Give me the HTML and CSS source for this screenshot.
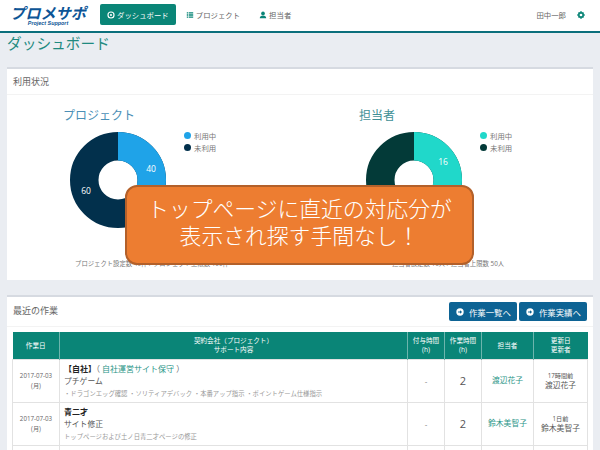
FILE: index.html
```html
<!DOCTYPE html>
<html lang="ja">
<head>
<meta charset="utf-8">
<title>ダッシュボード</title>
<link rel="stylesheet" href="styles.css">
</head>
<body>
<header class="topbar">
  <div class="logo">
    <div class="logo-main">プロメサポ</div>
    <div class="logo-sub">Project Support</div>
  </div>
  <nav class="nav">
    <a class="nav-item active">
      <svg class="nav-icon" viewBox="0 0 10 10"><circle cx="5" cy="5" r="3.8" fill="none" stroke="currentColor" stroke-width="1.4"/><circle cx="5" cy="5" r="1.3" fill="currentColor"/></svg>
      ダッシュボード</a>
    <a class="nav-item">
      <svg class="nav-icon" viewBox="0 0 10 10"><path d="M1 1.5h1.6v1.6H1zM3.4 1.5H9v1.6H3.4zM1 4.2h1.6v1.6H1zM3.4 4.2H9v1.6H3.4zM1 6.9h1.6v1.6H1zM3.4 6.9H9v1.6H3.4z" fill="#0a8577"/></svg>
      プロジェクト</a>
    <a class="nav-item">
      <svg class="nav-icon" viewBox="0 0 10 10"><circle cx="5" cy="3" r="2.3" fill="#0a8577"/><path d="M1 9.2c0-2.6 1.6-3.6 4-3.6s4 1 4 3.6z" fill="#0a8577"/></svg>
      担当者</a>
  </nav>
  <div class="user">
    <span>田中一郎</span>
    <svg class="gear" viewBox="0 0 10 10"><circle cx="5" cy="5" r="2.7" fill="none" stroke="#0a8577" stroke-width="2"/><path d="M4 .3h2v2H4zM4 7.7h2v2H4zM.3 4h2v2h-2zM7.7 4h2v2h-2z" fill="#0a8577"/><path d="M1.2 2.6l1.4-1.4 1.2 1.2-1.4 1.4zM6.2 7.6l1.4-1.4 1.2 1.2-1.4 1.4zM7.4 1.2l1.4 1.4-1.2 1.2-1.4-1.4zM2.4 6.2l1.4 1.4-1.2 1.2-1.4-1.4z" fill="#0a8577"/></svg>
  </div>
</header>

<main class="main">
  <h1 class="page-title">ダッシュボード</h1>

  <section class="card usage">
    <h2 class="card-head">利用状況</h2>
    <div class="charts">
      <div class="chart">
        <h3 class="chart-title blue">プロジェクト</h3>
        <div class="chart-row">
          <svg class="donut" viewBox="0 0 96 96">
            <circle cx="48" cy="48" r="33.75" fill="none" stroke="#02304c" stroke-width="28.5"/>
            <circle cx="48" cy="48" r="33.75" fill="none" stroke="#1fa3e8" stroke-width="28.5" stroke-dasharray="84.82 212.06" transform="rotate(-90 48 48)"/>
            <text x="81" y="40.3" class="donut-label">40</text>
            <text x="16" y="61.5" class="donut-label">60</text>
          </svg>
          <ul class="legend">
            <li><span class="dot dot-blue"></span>利用中</li>
            <li><span class="dot dot-navy"></span>未利用</li>
          </ul>
        </div>
        <p class="caption">プロジェクト設定数 40件 / プロジェクト上限数 100件</p>
      </div>
      <div class="chart">
        <h3 class="chart-title teal">担当者</h3>
        <div class="chart-row">
          <svg class="donut" viewBox="0 0 96 96">
            <circle cx="48" cy="48" r="33.75" fill="none" stroke="#033a38" stroke-width="28.5"/>
            <circle cx="48" cy="48" r="33.75" fill="none" stroke="#20d8ca" stroke-width="28.5" stroke-dasharray="67.86 212.06" transform="rotate(-90 48 48)"/>
            <text x="77" y="32.7" class="donut-label">16</text>
          </svg>
          <ul class="legend">
            <li><span class="dot dot-aqua"></span>利用中</li>
            <li><span class="dot dot-deep"></span>未利用</li>
          </ul>
        </div>
        <p class="caption">担当者設定数 16人 / 担当者上限数 50人</p>
      </div>
    </div>
  </section>

  <section class="card recent">
    <div class="recent-head">
      <h2 class="recent-title">最近の作業</h2>
      <div class="actions">
        <a class="btn"><svg class="btn-icon" viewBox="0 0 10 10"><circle cx="5" cy="5" r="4.6" fill="#fff"/><path d="M2.6 4.3h2.4V2.7L7.6 5 5 7.3V5.7H2.6z" fill="#0d6394"/></svg>作業一覧へ</a>
        <a class="btn"><svg class="btn-icon" viewBox="0 0 10 10"><circle cx="5" cy="5" r="4.6" fill="#fff"/><path d="M2.6 4.3h2.4V2.7L7.6 5 5 7.3V5.7H2.6z" fill="#0d6394"/></svg>作業実績へ</a>
      </div>
    </div>
    <table class="work">
      <colgroup>
        <col class="c-date"><col class="c-main"><col class="c-a"><col class="c-b"><col class="c-c"><col class="c-d">
      </colgroup>
      <thead>
        <tr>
          <th>作業日</th>
          <th>契約会社（プロジェクト）<br>サポート内容</th>
          <th>付与時間<br>(h)</th>
          <th>作業時間<br>(h)</th>
          <th>担当者</th>
          <th>更新日<br>更新者</th>
        </tr>
      </thead>
      <tbody>
        <tr>
          <td class="date">2017-07-03<br>(月)</td>
          <td class="desc">
            <div class="company"><b>【自社】</b>（ <a class="link">自社運営サイト保守</a> ）</div>
            <div class="task">プチゲーム</div>
            <div class="note">・ドラゴンエッグ確認 ・ソリティアデバック ・本番アップ指示 ・ポイントゲーム仕様指示</div>
          </td>
          <td class="num dash">-</td>
          <td class="num">2</td>
          <td class="person"><a class="link">渡辺花子</a></td>
          <td class="update"><small>17時間前</small><br>渡辺花子</td>
        </tr>
        <tr>
          <td class="date">2017-07-03<br>(月)</td>
          <td class="desc">
            <div class="company"><b>青二才</b></div>
            <div class="task">サイト修正</div>
            <div class="note">トップページおよび土ノ日青二才ページの修正</div>
          </td>
          <td class="num dash">-</td>
          <td class="num">2</td>
          <td class="person"><a class="link">鈴木美智子</a></td>
          <td class="update"><small>1日前</small><br>鈴木美智子</td>
        </tr>
        <tr>
          <td class="date">&nbsp;</td><td class="desc">&nbsp;</td><td></td><td></td><td></td><td></td>
        </tr>
      </tbody>
    </table>
  </section>
</main>

<div class="callout">トップページに直近の対応分が<br>表示され探す手間なし！</div>
</body>
</html>
```

FILE: styles.css
```css
* { box-sizing: border-box; }
html, body { margin: 0; padding: 0; }
html { height: 450px; overflow: hidden; }
body {
  position: relative;
  width: 600px;
  height: 450px;
  overflow: hidden;
  background: #eaedf2;
  color: #555;
  font-family: "Open Sans", "Noto Sans CJK JP", sans-serif;
  font-size: 8px;
}
h1, h2, h3, p, ul { margin: 0; padding: 0; font-weight: 400; }
ul { list-style: none; }

.topbar {
  display: flex;
  align-items: center;
  height: 33px;
  padding: 0 15px 2px 10px;
  background: #fff;
  border-bottom: 2px solid #0b6f7c;
}
.logo { width: 76px; text-align: center; color: #0d5596; }
.logo-main {
  font: italic 700 15.2px/16px "Noto Sans CJK JP", sans-serif;
  white-space: nowrap;
}
.logo-sub { font: italic 700 5.4px/6px "Liberation Sans", sans-serif; }

.nav { display: flex; align-items: center; margin-left: 14px; }
.nav-item {
  display: flex;
  align-items: center;
  gap: 2px;
  height: 21px;
  padding: 0 7px;
  margin-right: 3px;
  border-radius: 2px;
  color: #666;
  font-size: 7.4px;
}
.nav-item.active { background: #0a8577; color: #fff; }
.nav-item + .nav-item + .nav-item { margin-left: 2px; }
.nav-icon { width: 8px; height: 8px; }

.user { display: flex; align-items: center; gap: 11px; margin-left: auto; font-size: 7.4px; color: #666; }
.gear { width: 8px; height: 8px; }

.main { padding: 0 7px; }
.page-title {
  height: 34px;
  color: #1f8a80;
  font-size: 14.7px;
  line-height: 20px;
}

.card {
  background: #fff;
  border-top: 2px solid #d6dae1;
}
.usage { height: 213px; margin-bottom: 15px; }
.card-head {
  height: 26px;
  padding-left: 6px;
  border-bottom: 1px solid #f3f3f3;
  color: #666;
  font-size: 9px;
  line-height: 25px;
}
.charts { display: flex; padding: 11px 0 0 56px; }
.chart { flex: 0 0 296px; }
.chart:last-child { flex-basis: 230px; }
.chart-title { height: 26px; font-size: 12px; line-height: 20px; }
.chart-title.blue { color: #4b8fb6; }
.chart-title.teal { color: #3f9096; }
.chart-row { display: flex; align-items: flex-start; padding-left: 7px; }
.donut { display: block; flex: none; width: 96px; height: 96px; }
.donut-label { fill: #fff; font-size: 8.5px; font-family: "Open Sans", sans-serif; text-anchor: middle; }
.legend { margin: -3px 0 0 18px; color: #777; font-size: 7.4px; }
.legend li { display: flex; align-items: center; gap: 3px; height: 12px; }
.dot { width: 7px; height: 7px; border-radius: 50%; }
.dot-blue { background: #1fa3e8; }
.dot-navy { background: #02304c; }
.dot-aqua { background: #20d8ca; }
.dot-deep { background: #033a38; }
.caption {
  width: 178px;
  margin-top: 31px;
  color: #777;
  font-size: 6.35px;
  line-height: 10px;
  text-align: center;
  white-space: nowrap;
}

.recent { padding: 0 5px 0 6px; }
.recent-head {
  display: flex;
  align-items: center;
  justify-content: space-between;
  height: 30px;
  margin: 0 -5px 0 -6px;
  padding: 0 6px;
  border-bottom: 1px solid #f3f3f3;
}
.recent-title { margin-bottom: 2px; color: #666; font-size: 9px; }
.actions { display: flex; gap: 2px; }
.btn {
  display: flex;
  align-items: center;
  gap: 5px;
  width: 68px;
  height: 19px;
  padding-left: 7px;
  border-radius: 2px;
  background: #0d6394;
  color: #fff;
  font-size: 8.4px;
}
.btn-icon { width: 8px; height: 8px; }

.work {
  width: 575px;
  margin: 5px 0 0 -1px;
  table-layout: fixed;
  border-collapse: collapse;
  font-size: 7.4px;
}
.c-date { width: 47px; }
.c-main { width: 348px; }
.c-a { width: 37px; }
.c-b { width: 37px; }
.c-c { width: 52px; }
.c-d { width: 54px; }
.work th {
  height: 27px;
  padding: 0;
  background: #0a8577;
  border: 1px solid #6db5ad;
  border-width: 0 1px;
  color: #fff;
  font-size: 6.6px;
  font-weight: 400;
  line-height: 9.5px;
  text-align: center;
}
.work th:first-child { border-left: 0; }
.work th:last-child { border-right: 0; }
.work td {
  height: 43px;
  padding: 0;
  border: 1px solid #e2e2e2;
  text-align: center;
  vertical-align: middle;
  line-height: 9.5px;
}
.work .date { color: #666; font-size: 6.2px; }
.work .desc { padding-left: 4px; text-align: left; white-space: nowrap; }
.company { color: #666; font-size: 8px; line-height: 13px; }
.company b { color: #222; }
.task { color: #555; font-size: 7.8px; line-height: 13px; }
.note { color: #999; font-size: 6.35px; line-height: 11px; }
.link { color: #1f9486; }
.num { color: #555; font-size: 11px; }
.num.dash { color: #777; font-size: 8px; }
.person { font-size: 7.8px; }
.update { color: #555; font-size: 7.8px; }
.update small { font-size: 6.2px; }

.callout {
  position: absolute;
  left: 125px;
  top: 185px;
  width: 349px;
  height: 80px;
  padding-top: 7px;
  border: 2px solid #b3602a;
  border-radius: 12px;
  background: #ed7d31;
  color: #fff;
  font-family: "Noto Sans CJK JP", sans-serif;
  font-size: 21.8px;
  font-weight: 300;
  line-height: 27px;
  text-align: center;
}
```
